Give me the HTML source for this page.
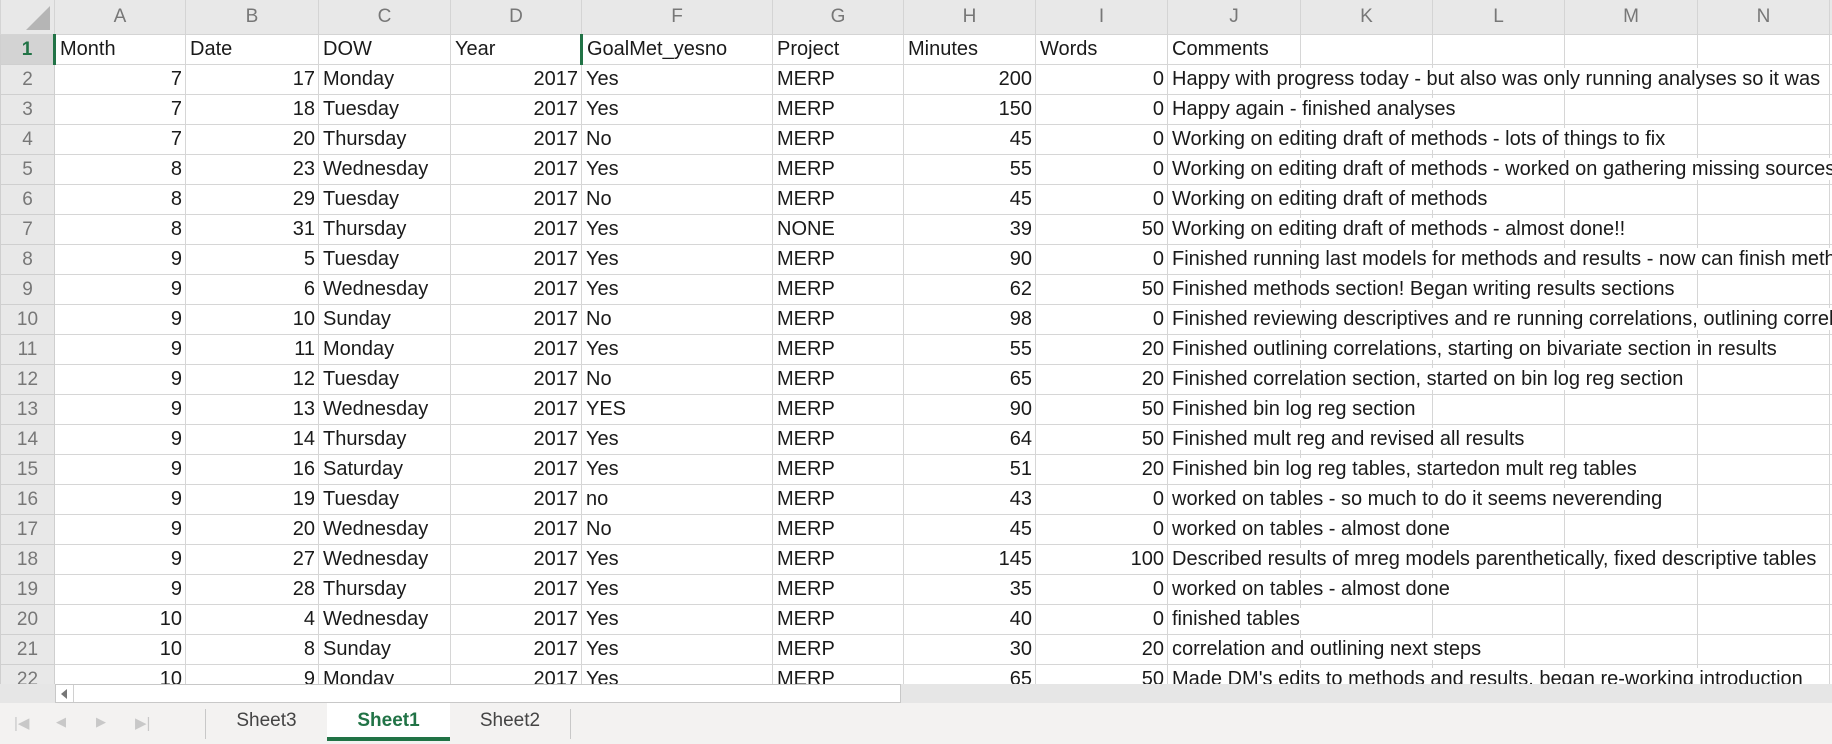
<!DOCTYPE html>
<html><head><meta charset="utf-8"><style>
*{margin:0;padding:0;box-sizing:border-box}
body{width:1832px;height:744px;overflow:hidden;background:#e6e6e6;font-family:"Liberation Sans",sans-serif;position:relative}
#grid{position:absolute;left:0;top:0;width:1832px;height:684px;overflow:hidden;background:#fff}
table{border-collapse:collapse;table-layout:fixed;width:1900px}
td{height:30px;border:1px solid #d6d6d6;font-size:20px;color:#1a1a1a;white-space:nowrap;overflow:hidden;padding:0 4px;line-height:29px}
td.n{text-align:right;padding-right:3px}
td.rh{background:#e8e8e8;color:#777;text-align:center;border-color:#cfcfcf;font-size:19px}
tr.ch td{height:34px;background:#e8e8e8;color:#777;text-align:center;font-size:19px;border-color:#d4d4d4;border-top:none}
td.j{overflow:visible}
td.j span{position:relative;background:#fff;z-index:2;padding-right:2px}
tr.r1 td.rh{background:#d3d3d3;color:#217346;font-weight:bold}
#scroll{position:absolute;left:0;top:684px;width:1832px;height:19px;background:#e6e6e6}
#sbox{position:absolute;left:55px;top:0;width:846px;height:19px;background:#fff;border:1px solid #c8c8c8}
#tabs{position:absolute;left:0;top:703px;width:1832px;height:41px;background:#f3f2f1}
.tab{position:absolute;top:0;height:38px;line-height:36px;font-size:19px;color:#444;text-align:center}
.sep{position:absolute;top:6px;width:1px;height:30px;background:#c8c8c8}
</style></head><body>
<div id="grid">
<table>
<colgroup><col style="width:54px"><col style="width:131px"><col style="width:133px"><col style="width:132px"><col style="width:131px"><col style="width:191px"><col style="width:131px"><col style="width:132px"><col style="width:132px"><col style="width:133px"><col style="width:132px"><col style="width:132px"><col style="width:133px"><col style="width:132px"><col style="width:75px"></colgroup>
<tr class="ch"><td style="position:relative"><div style="position:absolute;right:4px;bottom:4px;width:0;height:0;border-left:24px solid transparent;border-bottom:24px solid #b5b5b5"></div></td><td>A</td><td>B</td><td>C</td><td>D</td><td>F</td><td>G</td><td>H</td><td>I</td><td>J</td><td>K</td><td>L</td><td>M</td><td>N</td><td></td></tr>
<tr class="r1"><td class="rh">1</td><td style="border-left:3px solid #217346">Month</td><td>Date</td><td>DOW</td><td>Year</td><td style="border-left:3px solid #217346">GoalMet_yesno</td><td>Project</td><td>Minutes</td><td>Words</td><td>Comments</td><td></td><td></td><td></td><td></td><td></td></tr>
<tr><td class="rh">2</td><td class="n">7</td><td class="n">17</td><td>Monday</td><td class="n">2017</td><td>Yes</td><td>MERP</td><td class="n">200</td><td class="n">0</td><td class="j"><span>Happy with progress today - but also was only running analyses so it was</span></td><td></td><td></td><td></td><td></td><td></td></tr>
<tr><td class="rh">3</td><td class="n">7</td><td class="n">18</td><td>Tuesday</td><td class="n">2017</td><td>Yes</td><td>MERP</td><td class="n">150</td><td class="n">0</td><td class="j"><span>Happy again - finished analyses</span></td><td></td><td></td><td></td><td></td><td></td></tr>
<tr><td class="rh">4</td><td class="n">7</td><td class="n">20</td><td>Thursday</td><td class="n">2017</td><td>No</td><td>MERP</td><td class="n">45</td><td class="n">0</td><td class="j"><span>Working on editing draft of methods - lots of things to fix</span></td><td></td><td></td><td></td><td></td><td></td></tr>
<tr><td class="rh">5</td><td class="n">8</td><td class="n">23</td><td>Wednesday</td><td class="n">2017</td><td>Yes</td><td>MERP</td><td class="n">55</td><td class="n">0</td><td class="j"><span>Working on editing draft of methods - worked on gathering missing sources</span></td><td></td><td></td><td></td><td></td><td></td></tr>
<tr><td class="rh">6</td><td class="n">8</td><td class="n">29</td><td>Tuesday</td><td class="n">2017</td><td>No</td><td>MERP</td><td class="n">45</td><td class="n">0</td><td class="j"><span>Working on editing draft of methods</span></td><td></td><td></td><td></td><td></td><td></td></tr>
<tr><td class="rh">7</td><td class="n">8</td><td class="n">31</td><td>Thursday</td><td class="n">2017</td><td>Yes</td><td>NONE</td><td class="n">39</td><td class="n">50</td><td class="j"><span>Working on editing draft of methods - almost done!!</span></td><td></td><td></td><td></td><td></td><td></td></tr>
<tr><td class="rh">8</td><td class="n">9</td><td class="n">5</td><td>Tuesday</td><td class="n">2017</td><td>Yes</td><td>MERP</td><td class="n">90</td><td class="n">0</td><td class="j"><span>Finished running last models for methods and results - now can finish methods</span></td><td></td><td></td><td></td><td></td><td></td></tr>
<tr><td class="rh">9</td><td class="n">9</td><td class="n">6</td><td>Wednesday</td><td class="n">2017</td><td>Yes</td><td>MERP</td><td class="n">62</td><td class="n">50</td><td class="j"><span>Finished methods section! Began writing results sections</span></td><td></td><td></td><td></td><td></td><td></td></tr>
<tr><td class="rh">10</td><td class="n">9</td><td class="n">10</td><td>Sunday</td><td class="n">2017</td><td>No</td><td>MERP</td><td class="n">98</td><td class="n">0</td><td class="j"><span>Finished reviewing descriptives and re running correlations, outlining correlations</span></td><td></td><td></td><td></td><td></td><td></td></tr>
<tr><td class="rh">11</td><td class="n">9</td><td class="n">11</td><td>Monday</td><td class="n">2017</td><td>Yes</td><td>MERP</td><td class="n">55</td><td class="n">20</td><td class="j"><span>Finished outlining correlations, starting on bivariate section in results</span></td><td></td><td></td><td></td><td></td><td></td></tr>
<tr><td class="rh">12</td><td class="n">9</td><td class="n">12</td><td>Tuesday</td><td class="n">2017</td><td>No</td><td>MERP</td><td class="n">65</td><td class="n">20</td><td class="j"><span>Finished correlation section, started on bin log reg section</span></td><td></td><td></td><td></td><td></td><td></td></tr>
<tr><td class="rh">13</td><td class="n">9</td><td class="n">13</td><td>Wednesday</td><td class="n">2017</td><td>YES</td><td>MERP</td><td class="n">90</td><td class="n">50</td><td class="j"><span>Finished bin log reg section</span></td><td></td><td></td><td></td><td></td><td></td></tr>
<tr><td class="rh">14</td><td class="n">9</td><td class="n">14</td><td>Thursday</td><td class="n">2017</td><td>Yes</td><td>MERP</td><td class="n">64</td><td class="n">50</td><td class="j"><span>Finished mult reg and revised all results</span></td><td></td><td></td><td></td><td></td><td></td></tr>
<tr><td class="rh">15</td><td class="n">9</td><td class="n">16</td><td>Saturday</td><td class="n">2017</td><td>Yes</td><td>MERP</td><td class="n">51</td><td class="n">20</td><td class="j"><span>Finished bin log reg tables, startedon mult reg tables</span></td><td></td><td></td><td></td><td></td><td></td></tr>
<tr><td class="rh">16</td><td class="n">9</td><td class="n">19</td><td>Tuesday</td><td class="n">2017</td><td>no</td><td>MERP</td><td class="n">43</td><td class="n">0</td><td class="j"><span>worked on tables - so much to do it seems neverending</span></td><td></td><td></td><td></td><td></td><td></td></tr>
<tr><td class="rh">17</td><td class="n">9</td><td class="n">20</td><td>Wednesday</td><td class="n">2017</td><td>No</td><td>MERP</td><td class="n">45</td><td class="n">0</td><td class="j"><span>worked on tables - almost done</span></td><td></td><td></td><td></td><td></td><td></td></tr>
<tr><td class="rh">18</td><td class="n">9</td><td class="n">27</td><td>Wednesday</td><td class="n">2017</td><td>Yes</td><td>MERP</td><td class="n">145</td><td class="n">100</td><td class="j"><span>Described results of mreg models parenthetically, fixed descriptive tables</span></td><td></td><td></td><td></td><td></td><td></td></tr>
<tr><td class="rh">19</td><td class="n">9</td><td class="n">28</td><td>Thursday</td><td class="n">2017</td><td>Yes</td><td>MERP</td><td class="n">35</td><td class="n">0</td><td class="j"><span>worked on tables - almost done</span></td><td></td><td></td><td></td><td></td><td></td></tr>
<tr><td class="rh">20</td><td class="n">10</td><td class="n">4</td><td>Wednesday</td><td class="n">2017</td><td>Yes</td><td>MERP</td><td class="n">40</td><td class="n">0</td><td class="j"><span>finished tables</span></td><td></td><td></td><td></td><td></td><td></td></tr>
<tr><td class="rh">21</td><td class="n">10</td><td class="n">8</td><td>Sunday</td><td class="n">2017</td><td>Yes</td><td>MERP</td><td class="n">30</td><td class="n">20</td><td class="j"><span>correlation and outlining next steps</span></td><td></td><td></td><td></td><td></td><td></td></tr>
<tr><td class="rh">22</td><td class="n">10</td><td class="n">9</td><td>Monday</td><td class="n">2017</td><td>Yes</td><td>MERP</td><td class="n">65</td><td class="n">50</td><td class="j"><span>Made DM's edits to methods and results, began re-working introduction</span></td><td></td><td></td><td></td><td></td><td></td></tr>
</table>
</div>
<div id="scroll"><div id="sbox"><div style="position:absolute;left:0;top:0;width:18px;height:17px;border-right:1px solid #d0d0d0"></div><div style="position:absolute;left:5px;top:4px;width:0;height:0;border-top:5px solid transparent;border-bottom:5px solid transparent;border-right:6px solid #777"></div></div></div>
<div id="tabs">
<span style="position:absolute;left:14px;top:11px;color:#c8c8c8;font-size:15px">|◀</span>
<span style="position:absolute;left:56px;top:11px;color:#c8c8c8;font-size:13px">◀</span>
<span style="position:absolute;left:96px;top:11px;color:#c8c8c8;font-size:13px">▶</span>
<span style="position:absolute;left:135px;top:11px;color:#c8c8c8;font-size:15px">▶|</span>
<div class="sep" style="left:205px"></div>
<div class="tab" style="left:206px;width:121px">Sheet3</div>
<div class="tab" style="left:327px;width:123px;background:#fff;color:#217346;font-weight:bold;border-bottom:4px solid #217346">Sheet1</div>
<div class="tab" style="left:450px;width:120px">Sheet2</div>
<div class="sep" style="left:570px"></div>
</div>
</body></html>
